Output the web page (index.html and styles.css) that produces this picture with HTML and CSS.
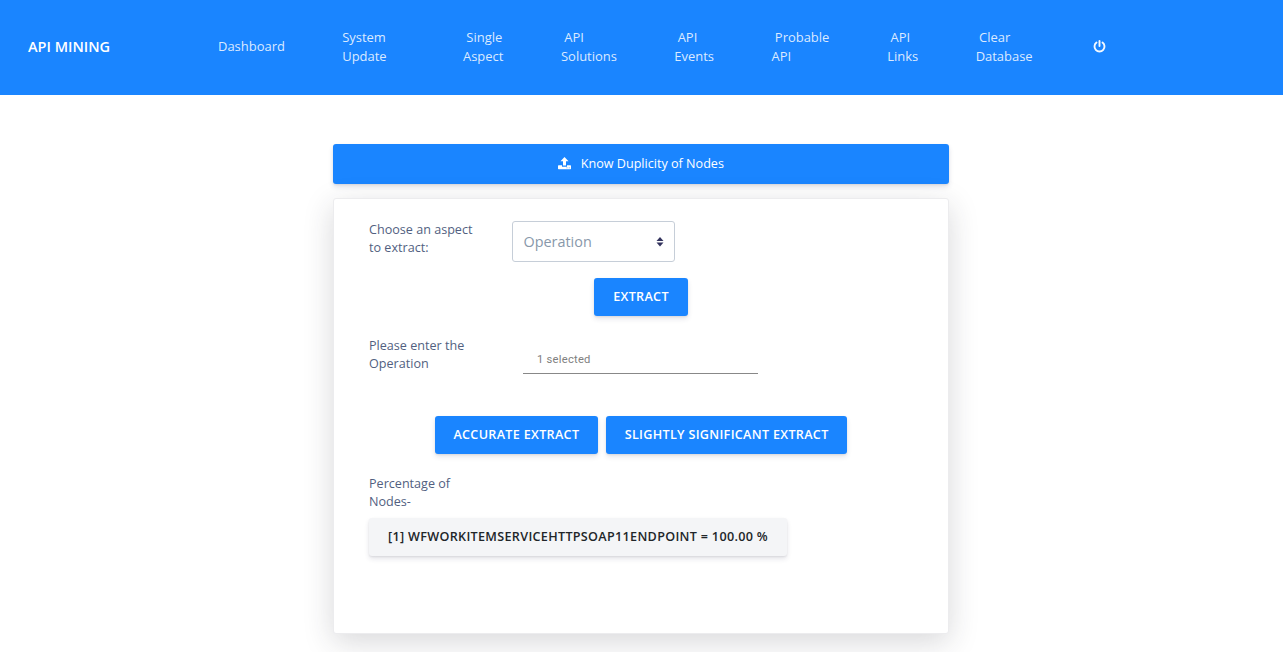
FILE: index.html
```html
<!DOCTYPE html>
<html lang="en">
<head>
<meta charset="utf-8">
<title>API Mining</title>
<link rel="stylesheet" href="styles.css">
</head>
<body>
<header class="navbar">
  <a class="brand">API MINING</a>
  <nav class="nav-links">
    <a>Dashboard</a>
    <a>System<br>Update</a>
    <a>&nbsp;Single<br>Aspect</a>
    <a>&nbsp;API<br>Solutions</a>
    <a>&nbsp;API<br>Events</a>
    <a>&nbsp;Probable<br>API</a>
    <a>&nbsp;API<br>Links</a>
    <a>&nbsp;Clear<br>Database</a>
    <a class="power" aria-label="Log out"><svg width="13" height="13" viewBox="0 0 13 13" fill="none" stroke="currentColor" stroke-width="1.9" stroke-linecap="round"><path d="M3.500 2.500a5 5 0 1 0 6 0M6.500 1v5"/></svg></a>
  </nav>
</header>
<main class="content">
  <button class="banner"><svg width="13" height="13" viewBox="0 0 13 13" fill="currentColor"><path d="M6.500 0l4 4.300H8V8.500H5V4.300H2.500z"/><path fill-rule="evenodd" d="M.6 8.300H4v1.400h5V8.300h3.400q.6 0 .6.600v2.700q0 .6-.6.600H.6q-.6 0-.6-.6V8.900q0-.6.6-.6zM8.600 10.500v.8h.8v-.8zM10.800 10.500v.8h.8v-.8z"/></svg><span>Know Duplicity of Nodes</span></button>
  <section class="card">
    <div class="row aspect-row">
      <label>Choose an aspect<br>to extract:</label>
      <div class="select"><span>Operation</span><svg width="8" height="10" viewBox="0 0 8 10" fill="#32325d"><path d="M.5 4L4 0l3.500 4zM.5 5.500h7L4 9.500z"/></svg></div>
    </div>
    <div class="buttons"><button class="btn">EXTRACT</button></div>
    <div class="row operation-row">
      <label>Please enter the<br>Operation</label>
      <div class="picker">1 selected</div>
    </div>
    <div class="buttons extract-modes"><button class="btn">ACCURATE EXTRACT</button><button class="btn">SLIGHTLY SIGNIFICANT EXTRACT</button></div>
    <label class="result-label">Percentage of<br>Nodes-</label>
    <button class="btn result">[1] WFWORKITEMSERVICEHTTPSOAP11ENDPOINT = 100.00 %</button>
  </section>
</main>
</body>
</html>
```
FILE: styles.css
```css
* { box-sizing: border-box; }
body {
  margin: 0;
  height: 652px;
  overflow: hidden;
  background: #fff;
  font-family: "Open Sans", sans-serif;
  font-size: 12.6px;
  color: #525f7f;
}
button { font-family: inherit; border: 0; margin: 0; }
svg { display: block; }
.navbar {
  height: 95px;
  background: #1a85ff;
  display: flex;
  align-items: center;
  padding: 0 0 2px 28px;
}
.brand {
  width: 190px;
  color: #fff;
  font-size: 14.5px;
  font-weight: 600;
  line-height: 20px;
}
.nav-links {
  display: grid;
  grid-template-columns: 124.2px 120.8px 98px 113.300px 97.200px 115.700px 88.500px 117.300px 20px;
  align-items: center;
  font-size: 12.96px;
  line-height: 19px;
  color: rgba(255, 255, 255, .85);
}
.power { color: rgba(255, 255, 255, .95); }
.content { width: 616px; margin: 49px 0 0 333px; }
.banner {
  width: 100%;
  height: 40px;
  display: flex;
  align-items: center;
  justify-content: center;
  gap: 9.7px;
  padding: 0 0 1px;
  border-radius: 3px;
  background: #1a85ff;
  color: #fff;
  font-size: 12.6px;
  box-shadow: 0 3px 5px rgba(50, 50, 93, .13), 0 1px 2px rgba(0, 0, 0, .08);
}
.card {
  height: 436px;
  margin-top: 14px;
  padding: 22px 35px;
  border: 1px solid #ececee;
  border-radius: 3px;
  background: #fff;
  box-shadow: 0 8px 30px rgba(40, 40, 50, .18);
}
.row { display: flex; }
label { display: block; line-height: 18px; }
.row label { width: 143px; }
.aspect-row { height: 57px; }
.select {
  width: 163px;
  height: 41px;
  display: flex;
  align-items: center;
  justify-content: space-between;
  padding: 0 10.500px;
  border: 1px solid #c6ced8;
  border-radius: 3px;
  color: #8898aa;
  font-size: 14.4px;
}
.buttons { display: flex; justify-content: center; gap: 8px; }
.btn {
  height: 38px;
  padding: 0 18.700px 1px;
  border-radius: 3px;
  background: #1a85ff;
  color: #fff;
  font-size: 12.6px;
  font-weight: 600;
  letter-spacing: .315px;
  white-space: nowrap;
  box-shadow: 0 3px 5px rgba(50, 50, 93, .12), 0 1px 2px rgba(0, 0, 0, .08);
}
.operation-row { margin-top: 21px; height: 79px; }
.picker {
  width: 235px;
  height: 37px;
  margin-left: 11px;
  padding: 16px 14px 0;
  border-bottom: 1px solid #888;
  color: #808080;
  font: 11.2px/14px Roboto, sans-serif;
  letter-spacing: .25px;
}
.result-label { margin-top: 21px; }
.result {
  display: block;
  margin-top: 7px;
  padding: 0 19px 1px;
  background: #f4f5f7;
  color: #212529;
}
```
